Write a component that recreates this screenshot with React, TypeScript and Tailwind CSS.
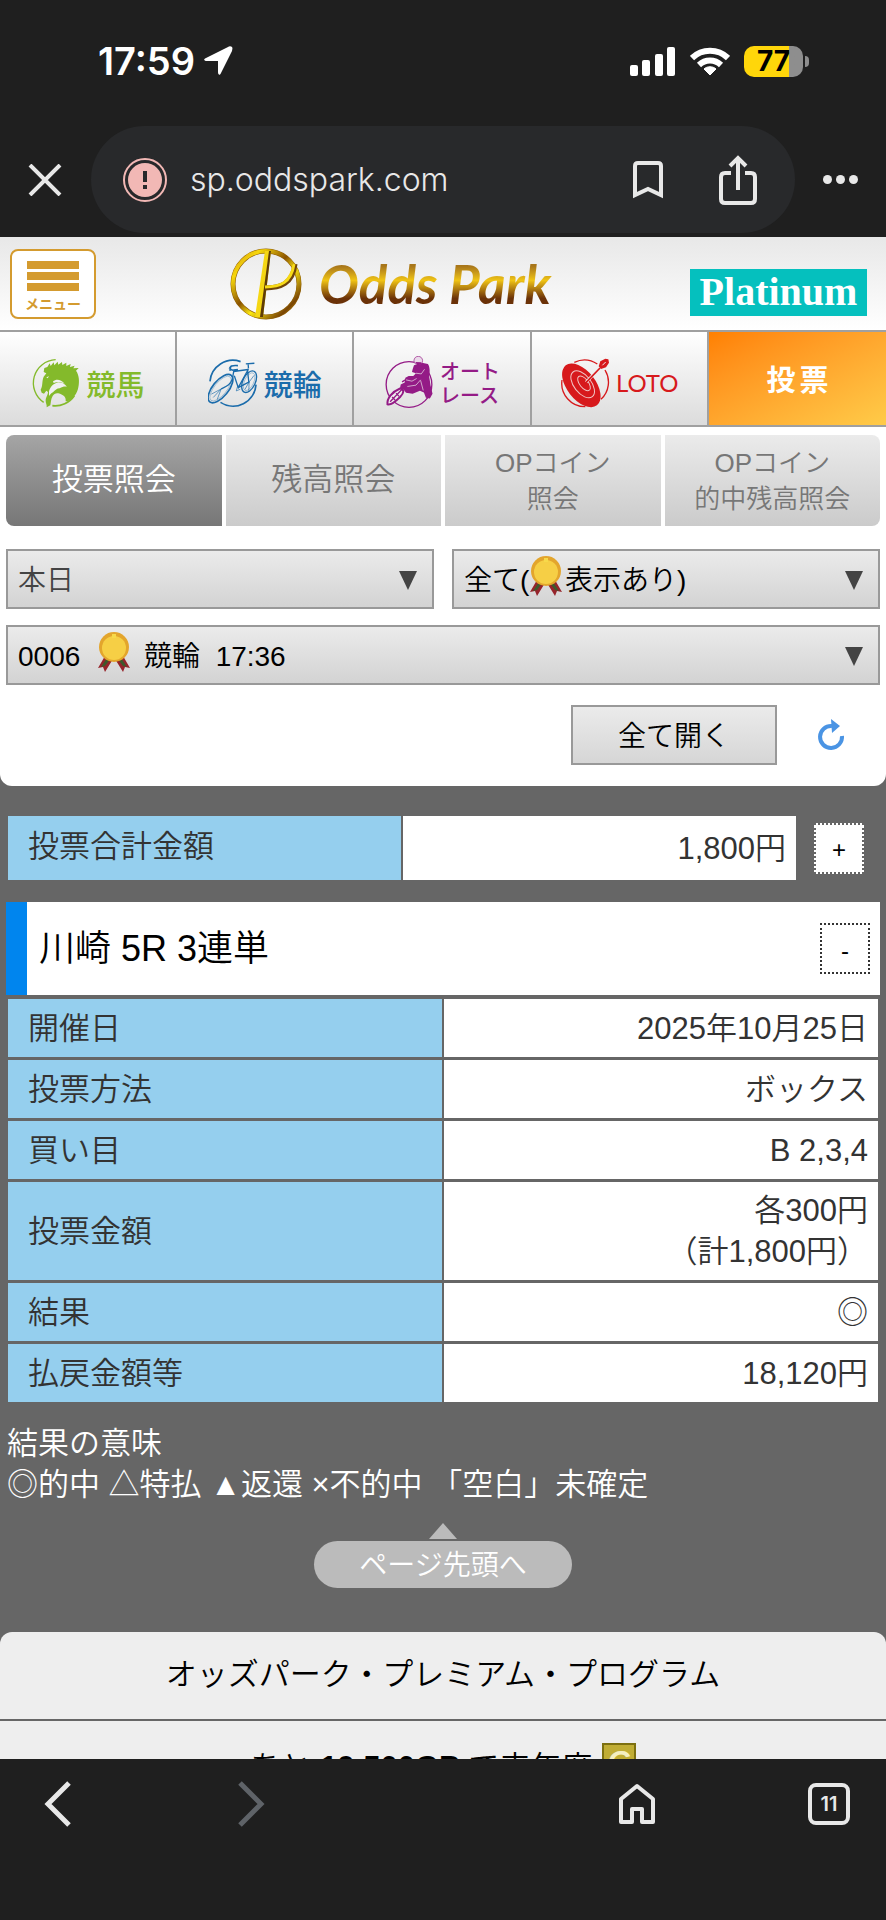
import type { ReactNode } from "react";

const categories = [
  { label: "競馬", icon: <HorseIcon />, text: "text-[29px] leading-8 text-[#84ba2b]" },
  { label: "競輪", icon: <BikeIcon />, text: "text-[29px] leading-8 text-[#1b6cab]" },
  { label: "オート\nレース", icon: <MotorIcon />, text: "text-xl leading-6 text-[#941b86]" },
];

const tabs = [
  { label: "残高照会", text: "text-[31px]" },
  { label: "OPコイン\n照会", text: "text-[26px] leading-9" },
  { label: "OPコイン\n的中残高照会", text: "text-[26px] leading-9" },
];

const rows = [
  { label: "開催日", value: "2025年10月25日" },
  { label: "投票方法", value: "ボックス" },
  { label: "買い目", value: "B 2,3,4" },
  { label: "投票金額", value: "各300円\n（計1,800円）" },
  { label: "結果", value: "◎" },
  { label: "払戻金額等", value: "18,120円" },
];

function HorseIcon() {
  return (
    <svg viewBox="30 42 150 150" className="h-[50px] w-[50px] shrink-0" fill="none" aria-hidden="true">
      <path d="M104 47A70 70 0 0 0 68 175" stroke="#84ba2b" strokeWidth="4" />
      <path d="M94 185A70 70 0 0 0 160 155" stroke="#84ba2b" strokeWidth="5" />
      <path
        d="M70 72L79 69L86 58L89 66L98 55L100 64L110 53L112 62L123 54L124 63L136 56L136 66L149 60L147 69L161 65L157 73L173 72L165 80
           C174 92 176 112 172 130C168 150 158 163 142 171L134 172C136 158 126 152 112 148C106 146 98 150 95 156C89 166 90 176 88 184L77 190
           C78 181 74 178 74 170C74 160 80 156 81 144L76 140L69 149L62 146L59 137C66 126 62 112 68 98L76 88L68 84Z"
        fill="#84ba2b"
      />
      <path d="M84 142C88 128 98 118 112 115C122 115 131 119 138 128C130 127 124 128 116 133C108 133 102 138 96 145C90 148 87 152 84 156Z" fill="#f1f1f1" />
      <path d="M96 112C106 104 120 106 131 119C120 113 110 112 98 117Z" fill="#f1f1f1" />
      <path d="M76 100l8-3-4 6z" fill="#f1f1f1" />
    </svg>
  );
}

function BikeIcon() {
  return (
    <svg viewBox="562 42 152 150" className="h-[50px] w-[50px] shrink-0" fill="none" stroke="#1b6cab" strokeWidth="3" aria-hidden="true">
      <path d="M568 112A70 70 0 0 1 661 52M600 176A70 70 0 0 0 708 122" strokeWidth="5" />
      <ellipse cx="600" cy="134" rx="24" ry="52" transform="rotate(39 600 134)" strokeWidth="5" />
      <ellipse cx="600" cy="134" rx="19" ry="46" transform="rotate(39 600 134)" strokeWidth="1" />
      <ellipse cx="687" cy="113" rx="19" ry="35" transform="rotate(25 687 113)" strokeWidth="4" />
      <ellipse cx="687" cy="113" rx="14" ry="29" transform="rotate(25 687 113)" strokeWidth="1" />
      <path d="M602 135c16-8 28-12 34-30l5-28 12-1M640 82l44-6M642 95l12 36 31-56M654 131l32-17-4-38M677 59l26-2M684 59l1 14" strokeWidth="4" />
      <path d="M627 74c4-12 10-10 26-10M627 79c4-4 9-2 13 0M632 65l-3 13" strokeWidth="5" />
      <path d="M602 135l-24 26M602 135l-30 16M602 135l-12 32M687 114l-13 23M687 114l15-20M687 114l-1 28M653 123l-5 18 12-5" strokeWidth="2" />
    </svg>
  );
}

function MotorIcon() {
  return (
    <svg viewBox="42 32 150 160" className="h-[53px] w-[50px] shrink-0" fill="none" aria-hidden="true">
      <circle cx="117" cy="118" r="69" stroke="#941b86" strokeWidth="4" />
      <path
        d="M132 60L156 52L174 56C181 66 180 82 178 95L182 120L188 146L180 160L168 158L162 142L150 137L128 146L108 143L100 132
           L88 138L92 118L104 112L106 98L116 92L130 92L138 84L126 80L128 72Z"
        fill="#941b86"
      />
      <path d="M52 178C50 160 66 140 90 130C104 132 102 144 90 156C78 168 62 182 52 178Z" fill="#efefef" stroke="#941b86" strokeWidth="6" />
      <path d="M60 170L104 124M66 156l9 9M78 144l9 10M96 110l14-8" stroke="#941b86" strokeWidth="4" />
      <circle cx="145" cy="46" r="13" fill="#ead9e9" stroke="#941b86" strokeWidth="2" />
      <path d="M136 50l18 1 2 7-14 2z" fill="#941b86" />
      <path d="M138 84l16 2 10-14M108 104l18 4 14-8M112 124l26-4 14-16M152 106l8 30" stroke="#efefef" strokeWidth="2" />
    </svg>
  );
}

function LotoIcon() {
  return (
    <svg viewBox="578 42 150 150" className="h-[50px] w-[50px] shrink-0" fill="none" stroke="#d7191c" aria-hidden="true">
      <path d="M621 55A70 70 0 0 1 690 60M713 78A70 70 0 0 1 701 166M584 108A70 70 0 0 0 654 188" strokeWidth="4" />
      <ellipse cx="642" cy="124" rx="43" ry="76" transform="rotate(-38 642 124)" fill="#d7191c" stroke="none" />
      <ellipse cx="646" cy="121" rx="26" ry="47" transform="rotate(-38 646 121)" stroke="#f0c4c4" strokeWidth="3" />
      <ellipse cx="650" cy="118" rx="13" ry="26" transform="rotate(-38 650 118)" stroke="#f0c4c4" strokeWidth="3" />
      <path d="M656 115l42-44" stroke="#eee" strokeWidth="9" />
      <path d="M650 122l48-50" strokeWidth="5" />
      <path d="M694 67l5-15 15-8 9 2 2 10-9 14-15 5z" fill="#d7191c" stroke="none" />
      <path d="M705 64l10-10" stroke="#eee" strokeWidth="3" />
    </svg>
  );
}

function Medal() {
  return (
    <svg viewBox="0 0 32 40" className="h-10 w-8" aria-hidden="true">
      <path d="M7 24L0 36l5-1 2 5 8-13zM25 24l7 12-5-1-2 5-8-13z" fill="#96242b" />
      <path d="M9 26L3 35l4-1 6-8zM23 26l6 9-4-1-6-8z" fill="#3d5a2c" />
      <circle cx="16" cy="15" r="15" fill="#e3a52c" />
      <circle cx="16" cy="16" r="12" fill="#f6cf45" />
      <path d="M14 2h4v4h-4z" fill="#f7d94a" />
    </svg>
  );
}

function SelectBox({ label, option, muted, medal }: { label: string; option: string; muted?: boolean; medal?: string }) {
  return (
    <div className="relative w-full">
      <select
        aria-label={label}
        className={`block h-[60px] w-full appearance-none border-2 border-[#999] bg-linear-to-b from-[#ebebeb] to-[#d3d3d3] pt-1 pl-2.5 text-[28px] ${
          muted ? "text-[#444]" : "text-black"
        }`}
      >
        <option>{option}</option>
      </select>
      {medal && <span className={`pointer-events-none absolute top-[7px] ${medal}`}><Medal /></span>}
      <svg viewBox="0 0 18 19" className="pointer-events-none absolute top-[22px] right-[17px] h-[19px] w-[18px]" aria-hidden="true">
        <path d="M0 0h18L9 19z" fill="#444" />
      </svg>
    </div>
  );
}

function StatusBar() {
  return (
    <div className="flex h-[122px] items-center justify-between pr-[77px] pl-[98px] text-white">
      <div className="flex items-center gap-2">
        <span className="font-[Inter] text-[38px] font-semibold">17:59</span>
        <svg viewBox="0 0 30 30" className="h-[30px] w-[30px]" aria-hidden="true">
          <path d="M29 1c1 1 0 3 0 4L18 27c-1 3-3 2-3-1V15H4c-3 0-4-2-1-3L25 1c1-1 3-1 4 0z" fill="white" />
        </svg>
      </div>
      <div className="flex items-center gap-[14px]">
        <svg viewBox="0 0 46 29" className="h-[29px] w-[46px]" fill="white" aria-hidden="true">
          <rect x="0" y="18" width="8" height="11" rx="2" />
          <rect x="12" y="13" width="8" height="16" rx="2" />
          <rect x="25" y="7" width="8" height="22" rx="2" />
          <rect x="37" y="0" width="8" height="29" rx="2" />
        </svg>
        <svg viewBox="0 0 40 29" className="h-[29px] w-10" fill="none" stroke="white" aria-hidden="true">
          <path d="M2 11a26 26 0 0 1 36 0M9 18a16 16 0 0 1 22 0" strokeWidth="6" />
          <path d="M20 28l-6-6c3-3 9-3 12 0z" fill="white" />
        </svg>
        <div className="flex items-center gap-0.5">
          <div className="flex h-[31px] w-[59px] items-center justify-center rounded-[10px] bg-linear-to-r from-[#ffd60a] from-77% to-[#8e8e8e] to-77% font-[Inter] text-[28px] font-bold text-black">
            77
          </div>
          <span className="h-[11px] w-[4px] rounded-r-full bg-[#8e8e8e]" />
        </div>
      </div>
    </div>
  );
}

function AddressBar() {
  return (
    <div className="flex h-[115px] items-start pr-7 pl-7 text-[#e8e8e8]">
      <button aria-label="閉じる" className="mt-[42px] w-[63px]">
        <svg viewBox="0 0 34 32" className="h-8 w-[34px]" stroke="currentColor" strokeWidth="4" aria-hidden="true">
          <path d="M2 1l30 30M32 1L2 31" />
        </svg>
      </button>
      <div className="mt-1 flex h-[107px] flex-1 items-center rounded-[54px] bg-[#28292b] pr-[38px] pl-[31px]">
        <svg viewBox="0 0 46 46" className="h-[46px] w-[46px]" aria-hidden="true">
          <circle cx="23" cy="23" r="21" fill="#28292b" stroke="#f2b8b5" strokeWidth="2" />
          <circle cx="23" cy="23" r="17" fill="#f2b8b5" />
          <path d="M23 14v11M23 28v4" stroke="#28292b" strokeWidth="4" />
        </svg>
        <span className="ml-[22px] flex-1 font-[Inter] text-[32px]">sp.oddspark.com</span>
        <button aria-label="ブックマーク">
          <svg viewBox="0 0 30 38" className="h-[38px] w-[30px]" fill="none" stroke="currentColor" strokeWidth="4" aria-hidden="true">
            <path d="M2 34V5q0-3 3-3h20q3 0 3 3v29l-13-6z" />
          </svg>
        </button>
        <button aria-label="共有" className="ml-14">
          <svg viewBox="0 0 38 50" className="h-[50px] w-[38px]" fill="none" stroke="currentColor" strokeWidth="4" aria-hidden="true">
            <path d="M12 18H6q-4 0-4 4v22q0 4 4 4h26q4 0 4-4V22q0-4-4-4h-6M19 35V4M11 11l8-8 8 8" />
          </svg>
        </button>
      </div>
      <button aria-label="その他" className="mt-[53px] ml-7 flex gap-1">
        <span className="h-[9px] w-[9px] rounded-full bg-current" />
        <span className="h-[9px] w-[9px] rounded-full bg-current" />
        <span className="h-[9px] w-[9px] rounded-full bg-current" />
      </button>
    </div>
  );
}

function SiteHeader() {
  return (
    <header className="flex h-[93px] items-center bg-linear-to-b from-[#e8e8e8] to-white pr-[19px] pl-2.5">
      <button className="flex h-[70px] w-[86px] flex-col items-center gap-[3px] rounded-lg border-2 border-[#d49b2f] bg-white pt-2.5 text-[#d49b2f]">
        <span className="h-2 w-[52px] bg-current" />
        <span className="h-2 w-[52px] bg-current" />
        <span className="h-2 w-[52px] bg-current" />
        <span className="text-sm leading-5 font-bold">メニュー</span>
      </button>
      <a href="#" className="ml-[134px] flex items-center gap-[17px]">
        <svg viewBox="0 0 72 72" className="h-[72px] w-[72px]" fill="none" aria-hidden="true">
          <defs>
            <linearGradient id="ring" x1="0" y1="0" x2="1" y2="1">
              <stop offset="0" stopColor="#c98a12" />
              <stop offset="0.2" stopColor="#f7d80c" />
              <stop offset="0.45" stopColor="#8a5200" />
              <stop offset="0.6" stopColor="#fde910" />
              <stop offset="0.85" stopColor="#7a4504" />
              <stop offset="1" stopColor="#f3d40e" />
            </linearGradient>
          </defs>
          <circle cx="36" cy="36" r="33" stroke="#8f5d05" strokeWidth="5" />
          <circle cx="36" cy="36" r="33" stroke="url(#ring)" strokeWidth="4" />
          <path d="M41 3h-6L25 69h8z" fill="#f5d714" />
          <path d="M41 3h-2L30 69h3z" fill="#5f3c08" />
          <path d="M35 40c15 0 28-4 30-24" stroke="#70450a" strokeWidth="5" />
          <path d="M35 39c15 0 26-4 29-23" stroke="#f7da17" strokeWidth="3" />
        </svg>
        <span className="bg-linear-to-b from-[#a8761a] from-25% via-[#f0c414] via-45% to-[#6b3208] to-70% bg-clip-text pr-1 font-[Lato] text-[53px] leading-[72px] font-bold text-transparent italic">
          Odds Park
        </span>
      </a>
      <span className="mt-[17px] ml-auto flex h-[47px] w-[177px] items-center justify-center bg-[#05c0be] font-['Liberation_Serif',serif] text-[40px] font-bold text-white">
        Platinum
      </span>
    </header>
  );
}

function CategoryNav() {
  return (
    <nav className="grid h-[97px] grid-cols-5 border-y-2 border-[#a0a0a0] bg-linear-to-b from-white to-[#dcdcdc] font-['Noto_Sans_CJK_JP',sans-serif] font-medium">
      {categories.map((c) => (
        <a key={c.label} href="#" className="flex items-center justify-center gap-1.5 border-r-2 border-[#a0a0a0] pt-2">
          {c.icon}
          <span className={`whitespace-pre ${c.text}`}>{c.label}</span>
        </a>
      ))}
      <a href="#" className="flex items-center justify-center gap-1.5 border-r-2 border-[#a0a0a0] pt-2">
        <LotoIcon />
        <span className="font-[Lato] text-2xl font-normal text-[#d7191c]">LOTO</span>
      </a>
      <a href="#" className="flex items-center justify-center gap-1 bg-linear-to-br from-[#ff8000] to-[#ffcb48] text-[29px] font-bold text-white">
        <span>投</span>
        <span>票</span>
      </a>
    </nav>
  );
}

function InquiryPanel() {
  return (
    <section className="rounded-b-xl bg-white px-1.5 pt-2 pb-[21px]">
      <div className="grid grid-cols-4 gap-1 overflow-hidden rounded-lg">
        <button className="h-[91px] bg-linear-to-b from-[#a5a5a5] to-[#777] text-[31px] text-white">投票照会</button>
        {tabs.map((t) => (
          <button key={t.label} className={`h-[91px] bg-linear-to-b from-[#ebebeb] to-[#cbcbcb] whitespace-pre text-[#777] ${t.text}`}>
            {t.label}
          </button>
        ))}
      </div>
      <div className="mt-[23px] grid grid-cols-2 gap-[18px]">
        <SelectBox label="期間" option="本日" muted />
        <SelectBox label="表示" option={"全て(\u3000\u00a0表示あり)"} medal="left-[78px]" />
      </div>
      <div className="mt-4">
        <SelectBox label="受付" option={"0006\u3000\u3000\u00a0競輪\u00a0\u00a017:36"} medal="left-[92px]" />
      </div>
      <div className="mt-5 flex items-center justify-end gap-10 pr-[35px]">
        <button className="h-[60px] w-[206px] border-2 border-[#999] bg-linear-to-b from-[#ebebeb] to-[#d6d6d6] pt-1 text-[28px] text-black">
          全て開く
        </button>
        <button aria-label="更新">
          <svg viewBox="0 0 28 32" className="h-8 w-7" fill="none" aria-hidden="true">
            <path d="M15 7A11 11 0 1 0 25 17" stroke="#4a94e4" strokeWidth="4" />
            <path d="M14 0l9 7-8 7z" fill="#4a94e4" />
          </svg>
        </button>
      </div>
    </section>
  );
}

function ToggleButton({ children, tone }: { children: ReactNode; tone: string }) {
  return (
    <button className={`h-[51px] w-[50px] shrink-0 border-2 border-dotted bg-white pt-1 text-2xl text-black ${tone}`}>
      {children}
    </button>
  );
}

function BetDetails() {
  return (
    <section className="pt-[30px] text-[31px] leading-[41px] text-[#333]">
      <div className="flex items-center pr-[22px] pl-2">
        <dl className="grid h-16 flex-1 grid-cols-2 gap-0.5">
          <dt className="bg-[#95cfee] pt-2.5 pl-5">投票合計金額</dt>
          <dd className="bg-white pt-3 pr-2.5 text-right">1,800円</dd>
        </dl>
        <div className="ml-[18px]">
          <ToggleButton tone="border-[#666]">+</ToggleButton>
        </div>
      </div>

      <div className="mx-1.5 mt-[22px] flex h-[93px] items-center justify-between border-l-[21px] border-[#0085ee] bg-white pr-2.5 pl-3">
        <h2 className="text-4xl text-black">川崎 5R 3連単</h2>
        <ToggleButton tone="border-[#333]">-</ToggleButton>
      </div>

      <div className="mt-px px-1.5">
        <table className="w-full table-fixed border-separate border-spacing-x-[2px] border-spacing-y-[3px]">
          <tbody>
            {rows.map((r) => (
              <tr key={r.label} className="h-[58px]">
                <th scope="row" className="bg-[#95cfee] py-2 pl-5 text-left font-[350]">{r.label}</th>
                <td className="bg-white py-2 pr-2.5 text-right whitespace-pre">{r.value}</td>
              </tr>
            ))}
          </tbody>
        </table>
      </div>

      <p className="mt-[18px] pl-[7px] whitespace-pre text-white">
        結果の意味{"\n"}◎的中 △特払 ▲返還 ×不的中 「空白」未確定
      </p>
    </section>
  );
}

function PageFooter() {
  return (
    <footer>
      <a href="#" className="mx-auto mt-[18px] flex w-[258px] flex-col items-center gap-0.5">
        <svg viewBox="0 0 28 16" className="h-4 w-7" aria-hidden="true">
          <path d="M14 0l14 16H0z" fill="#bbb" />
        </svg>
        <span className="flex h-[47px] w-full items-center justify-center rounded-full bg-[#bbb] pt-0.5 text-[28px] text-white">ページ先頭へ</span>
      </a>
      <div className="mt-11 rounded-t-xl bg-[#eee] text-center text-[31px] leading-[41px] text-black">
        <a href="#" className="block h-[89px] border-b-2 border-[#666] pt-[22px]">オッズパーク・プレミアム・プログラム</a>
        <div className="flex justify-center gap-2.5 pt-[22px]">
          <p className="pt-1">あと <b>19,500GP</b> で来年度</p>
          <span className="h-[34px] w-[34px] border-2 border-[#7d7010] bg-[#c0ad34] text-3xl leading-8 font-bold text-[#f4efc0] italic">G</span>
        </div>
      </div>
    </footer>
  );
}

function BottomBar() {
  return (
    <nav className="flex h-[161px] shrink-0 items-start justify-between bg-[#1f1f1f] px-9 pt-[22px] text-[#e8e8e8]">
      <button aria-label="戻る" className="pl-2">
        <svg viewBox="0 0 28 46" className="h-[46px] w-7" fill="none" stroke="currentColor" strokeWidth="5" aria-hidden="true">
          <path d="M25 2L4 23l21 21" />
        </svg>
      </button>
      <button aria-label="進む" className="ml-[165px] flex-1 text-[#5f6368]">
        <svg viewBox="0 0 28 46" className="h-[46px] w-7" fill="none" stroke="currentColor" strokeWidth="5" aria-hidden="true">
          <path d="M3 2l21 21L3 44" />
        </svg>
      </button>
      <button aria-label="ホーム" className="mr-[152px] pt-0.5">
        <svg viewBox="0 0 38 42" className="h-[42px] w-[38px]" fill="none" stroke="currentColor" strokeWidth="4" strokeLinejoin="round" aria-hidden="true">
          <path d="M3 16L19 3l16 13v23H24V26H14v13H3z" />
        </svg>
      </button>
      <button aria-label="タブ一覧" className="mt-0.5 flex h-[42px] w-[42px] items-center justify-center rounded-lg border-4 border-current font-[Inter] text-xl font-semibold">
        11
      </button>
    </nav>
  );
}

export default function App() {
  return (
    <div className="flex h-screen flex-col overflow-hidden bg-[#666] font-['Liberation_Sans','Noto_Sans_CJK_JP',sans-serif] font-[350]" lang="ja">
      <div className="shrink-0 bg-[#1f1f1f]">
        <StatusBar />
        <AddressBar />
      </div>
      <main className="min-h-0 flex-1 overflow-hidden">
        <SiteHeader />
        <CategoryNav />
        <InquiryPanel />
        <BetDetails />
        <PageFooter />
      </main>
      <BottomBar />
    </div>
  );
}
